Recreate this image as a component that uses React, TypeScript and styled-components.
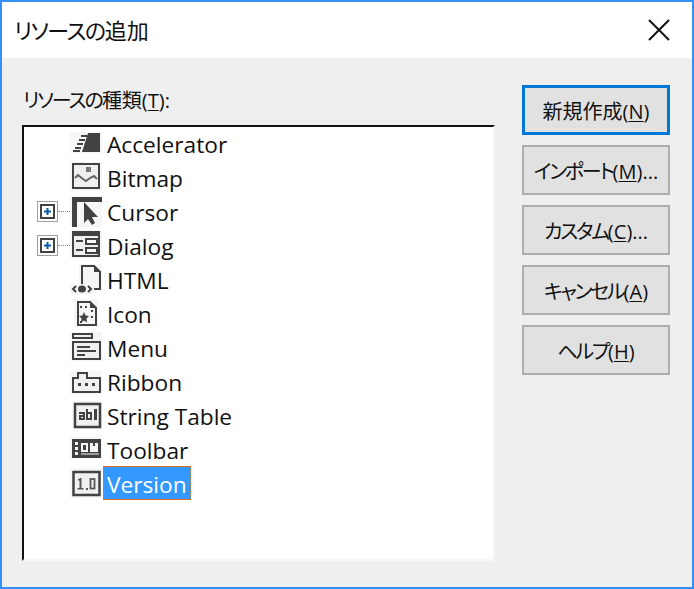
import React from 'react';
import styled, { createGlobalStyle } from 'styled-components';

const GlobalStyle = createGlobalStyle`
  html, body {
    margin: 0;
    padding: 0;
    background: #efefef;
  }
`;

const fontStack = `"Open Sans", "Noto Sans CJK JP", sans-serif`;
const ink = '#424242';

const Window = styled.div`
  box-sizing: border-box;
  width: 694px;
  height: 589px;
  display: flex;
  flex-direction: column;
  border: 2px solid #3390f8;
  background: #efefef;
  font-family: ${fontStack};
  font-feature-settings: 'palt';
  color: #111;
  overflow: hidden;
`;

const TitleBar = styled.div`
  height: 56px;
  flex: none;
  display: flex;
  align-items: center;
  justify-content: space-between;
  padding: 0 22px 0 12px;
  background: #fff;
`;

const Title = styled.div`
  font-size: 22px;
  line-height: 56px;
`;

// Meiryo UI kana are narrower than the kanji next to them
const Kana = styled.span<{ $squeeze: number }>`
  letter-spacing: ${({ $squeeze }) => -$squeeze}px;
`;

const CloseIcon = styled.svg`
  width: 22px;
  height: 22px;
  display: block;
`;

const Body = styled.div`
  flex: 1;
  display: flex;
  gap: 27px;
  padding: 27px 22px 26px 20px;
`;

const LeftColumn = styled.div`
  width: 473px;
  display: flex;
  flex-direction: column;
`;

const FieldLabel = styled.div`
  font-size: 20px;
  line-height: 32px;
  height: 40px;
  padding-left: 1px;
`;

const Hotkey = styled.span`
  text-decoration: underline;
  text-underline-offset: 2px;
  text-decoration-thickness: 1px;
`;

const TreeBox = styled.div`
  flex: 1;
  box-sizing: border-box;
  background: #fff;
  border-style: solid;
  border-width: 2px;
  border-color: #111 #f6f6f6 #f6f6f6 #111;
  padding-top: 1px;
`;

const Row = styled.div`
  height: 34px;
  display: flex;
  align-items: flex-start;
  position: relative;
  padding-left: 46px;
`;

const Expander = styled.div`
  position: absolute;
  left: 13px;
  top: 5px;
  box-sizing: border-box;
  width: 21px;
  height: 21px;
  border: 1px solid #a0a0a0;
  padding: 2px;
  display: flex;
`;

const ExpanderInner = styled.div`
  box-sizing: border-box;
  flex: 1;
  border: 2px solid ${ink};
  color: #0a5ba8;
  display: flex;
  align-items: center;
  justify-content: center;
`;

const Connector = styled.div`
  position: absolute;
  left: 34px;
  top: 15px;
  width: 12px;
  border-top: 1px dotted #8a8a8a;
`;

const IconSlot = styled.svg`
  width: 32px;
  height: 32px;
  flex: none;
  display: block;
`;

const ItemLabel = styled.div<{ $selected?: boolean }>`
  box-sizing: border-box;
  height: 34px;
  margin: -2px 0 0 1px;
  padding: 1px 3px 0 3px;
  border: 1px ${({ $selected }) => ($selected ? 'dotted #e8701a' : 'solid transparent')};
  font-size: 22.7px;
  line-height: 33px;
  white-space: nowrap;
  background: ${({ $selected }) => ($selected ? '#3399ff' : 'transparent')};
  color: ${({ $selected }) => ($selected ? '#fff' : '#111')};
`;

const ButtonColumn = styled.div`
  width: 148px;
  display: flex;
  flex-direction: column;
  gap: 10px;
`;

const DialogButton = styled.button<{ $primary?: boolean }>`
  box-sizing: border-box;
  width: 148px;
  height: 50px;
  padding: 0;
  background: #e1e1e1;
  border: ${({ $primary }) => ($primary ? '3px solid #0078d7' : '2px solid #adadad')};
  font-family: ${fontStack};
  font-feature-settings: 'palt';
  font-size: 20px;
  color: #111;
  white-space: nowrap;
`;

const plate = '#f6f6f6';
const face = '#f0f0f0';

const AcceleratorIcon = () => (
  <IconSlot viewBox="0 0 32 32">
    <rect y="4" width="32" height="21" fill={plate} />
    <path d="M18 5h12v19H12z" fill={ink} />
    <path d="M11 8h6M9 12h6M7 16h6M5 20h6M3 23h7" stroke={ink} strokeWidth="2" fill="none" />
  </IconSlot>
);

const BitmapIcon = () => (
  <IconSlot viewBox="0 0 32 32">
    <rect width="32" height="29" fill={plate} />
    <rect x="3" y="2" width="26" height="24" fill={face} stroke={ink} strokeWidth="2" />
    <rect x="16" y="5" width="5" height="5" fill="#777" />
    <path d="M5 16l3-3 5 4 3 2 4-3 4-2 3 3" fill="none" stroke="#666" strokeWidth="2" />
  </IconSlot>
);

const CursorIcon = () => (
  <IconSlot viewBox="0 0 32 32">
    <rect width="32" height="31" fill={plate} />
    <path d="M2 1h30v5H7v25H2z" fill={ink} />
    <path d="M14 6l14 15h-6l3 6-3 2-4-6-4 4z" fill={ink} />
  </IconSlot>
);

const DialogIcon = () => (
  <IconSlot viewBox="0 0 32 32">
    <rect width="32" height="28" fill={plate} />
    <rect x="3" y="2" width="26" height="24" fill={face} stroke={ink} strokeWidth="2" />
    <rect x="2" y="1" width="28" height="5" fill={ink} />
    <path d="M6 11h7M6 20h7" stroke={ink} strokeWidth="2" />
    <rect x="16" y="9" width="11" height="5" fill={plate} stroke={ink} strokeWidth="2" />
    <rect x="16" y="18" width="11" height="5" fill={plate} stroke={ink} strokeWidth="2" />
  </IconSlot>
);

const HtmlIcon = () => (
  <IconSlot viewBox="0 0 32 32">
    <rect x="9" width="23" height="27" fill={plate} />
    <path d="M12 21V2h12l6 6v17h-7" fill={plate} stroke={ink} strokeWidth="2" />
    <path d="M24 1l7 7h-7z" fill={ink} />
    <rect y="20" width="24" height="10" fill={plate} />
    <path d="M6 22l-3 3 3 3M18 22l3 3-3 3" fill="none" stroke={ink} strokeWidth="2" />
    <ellipse cx="12" cy="25" rx="4" ry="3.500" fill={ink} />
  </IconSlot>
);

const IconIcon = () => (
  <IconSlot viewBox="0 0 32 32">
    <rect x="4" y="1" width="24" height="28" fill={plate} />
    <path d="M8 4h12l6 6v17H8z" fill={plate} stroke={ink} strokeWidth="2" />
    <path d="M20 3l7 7h-7z" fill={ink} />
    <path d="M10 8h2v2h-2zM15 8h2v2h-2zM21 12h2v2h-2zM21 18h2v2h-2zM10 23h2v2h-2z" fill={ink} />
    <path d="M14 14l1.500 3.500 3.500.5-2.500 2.500.5 4-3-2-3 2 .5-4-2.500-2.500 3.500-.5z" fill={ink} />
  </IconSlot>
);

const MenuIcon = () => (
  <IconSlot viewBox="0 0 32 32">
    <rect width="32" height="29" fill={plate} />
    <rect x="3" y="2" width="19" height="4" fill={face} stroke={ink} strokeWidth="2" />
    <rect x="3" y="10" width="27" height="17" fill={face} stroke={ink} strokeWidth="2" />
    <path d="M7 15h13M7 19h19M7 23h8" stroke={ink} strokeWidth="2" />
  </IconSlot>
);

const RibbonIcon = () => (
  <IconSlot viewBox="0 0 32 32">
    <rect y="5" width="32" height="23" fill={plate} />
    <path d="M3 26V12h5V7h9v5h13v14z" fill={face} stroke={ink} strokeWidth="2" />
    <path d="M8 17h3v3H8zM15 17h3v3h-3zM22 17h3v3h-3z" fill={ink} />
  </IconSlot>
);

const StringTableIcon = () => (
  <IconSlot viewBox="0 0 32 32">
    <rect x="2" y="1" width="30" height="28" fill={plate} />
    <rect x="5" y="4" width="25" height="23" fill={face} stroke={ink} strokeWidth="2.500" />
    <path
      d="M9 12h6v8H9v-5h4v-1H9zM11 17v1h2v-1zM16 9h2v3h4v8h-6zM18 14v4h2v-4zM24 9h3v11h-3z"
      fill={ink}
      fillRule="evenodd"
    />
  </IconSlot>
);

const ToolbarIcon = () => (
  <IconSlot viewBox="0 0 32 32">
    <rect y="3" width="32" height="22" fill={plate} />
    <rect x="2" y="5" width="29" height="19" fill={ink} />
    <path d="M5 8h3v3H5zM5 13h3v3H5zM5 18h3v3H5z" fill={plate} />
    <rect x="12" y="10" width="5" height="7" fill="none" stroke={plate} strokeWidth="2" />
    <path d="M20 9h3v3h2V9h3v9h-8z" fill={plate} />
    <path d="M11 20h18" stroke={plate} strokeWidth="1" />
  </IconSlot>
);

const VersionIcon = () => (
  <IconSlot viewBox="0 0 32 32">
    <rect width="32" height="30" fill={plate} />
    <rect x="3.500" y="4" width="26" height="23" fill={face} stroke={ink} strokeWidth="2.500" />
    <path d="M9.500 10h2v10h2v1.500h-6V20h2v-7.500H8V11h1.500z" fill="#555" />
    <path d="M16 20h2v2h-2z" fill="#555" />
    <rect x="20.500" y="11" width="4" height="9.500" fill="none" stroke="#555" strokeWidth="1.800" />
  </IconSlot>
);

const resources = [
  { name: 'Accelerator', Icon: AcceleratorIcon },
  { name: 'Bitmap', Icon: BitmapIcon },
  { name: 'Cursor', Icon: CursorIcon, expandable: true },
  { name: 'Dialog', Icon: DialogIcon, expandable: true },
  { name: 'HTML', Icon: HtmlIcon },
  { name: 'Icon', Icon: IconIcon },
  { name: 'Menu', Icon: MenuIcon },
  { name: 'Ribbon', Icon: RibbonIcon },
  { name: 'String Table', Icon: StringTableIcon },
  { name: 'Toolbar', Icon: ToolbarIcon },
  { name: 'Version', Icon: VersionIcon, selected: true },
];

const buttons = [
  { kana: '', label: '新規作成(', key: 'N', tail: ')', primary: true },
  { kana: 'インポート', label: '(', key: 'M', tail: ')...' },
  { kana: 'カスタム', label: '(', key: 'C', tail: ')...' },
  { kana: 'キャンセル', label: '(', key: 'A', tail: ')' },
  { kana: 'ヘルプ', label: '(', key: 'H', tail: ')' },
];

const App: React.FC = () => (
  <Window>
    <GlobalStyle />
    <TitleBar>
      <Title>
        <Kana $squeeze={1.4}>リソースの</Kana>追加
      </Title>
      <CloseIcon viewBox="0 0 22 22">
        <path d="M1 1l20 20M21 1L1 21" stroke="#111" strokeWidth="2" fill="none" />
      </CloseIcon>
    </TitleBar>
    <Body>
      <LeftColumn>
        <FieldLabel>
          <Kana $squeeze={2}>リソースの</Kana>種類(<Hotkey>T</Hotkey>):
        </FieldLabel>
        <TreeBox>
          {resources.map(({ name, Icon, expandable, selected }) => (
            <Row key={name}>
              {expandable && (
                <>
                  <Expander>
                    <ExpanderInner>
                      <svg width="7" height="7" viewBox="0 0 7 7">
                        <path d="M2.500 0h2v2.500H7v2H4.500V7h-2V4.500H0v-2h2.500z" fill="currentColor" />
                      </svg>
                    </ExpanderInner>
                  </Expander>
                  <Connector />
                </>
              )}
              <Icon />
              <ItemLabel $selected={selected}>{name}</ItemLabel>
            </Row>
          ))}
        </TreeBox>
      </LeftColumn>
      <ButtonColumn>
        {buttons.map(({ kana, label, key, tail, primary }) => (
          <DialogButton key={key} $primary={primary}>
            <Kana $squeeze={2.2}>{kana}</Kana>
            {label}
            <Hotkey>{key}</Hotkey>
            {tail}
          </DialogButton>
        ))}
      </ButtonColumn>
    </Body>
  </Window>
);

export default App;
